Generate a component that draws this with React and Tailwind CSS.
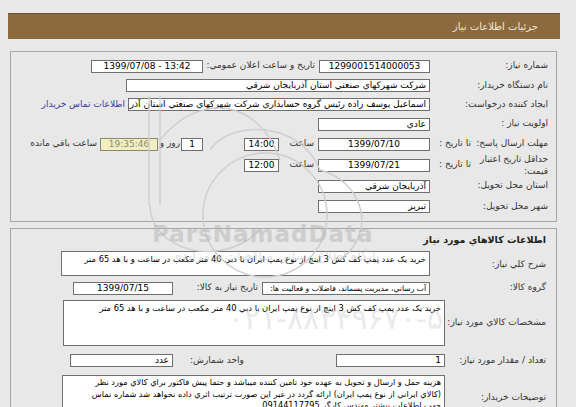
import React from 'react';

const Box = ({ className = '', children, dir, size = 'text-[9px]', tone = 'bg-white text-black border-[#6f6f6f]' }) => (
  <div
    dir={dir}
    className={`h-[13px] shrink-0 border px-[3px] leading-[11px] overflow-hidden whitespace-nowrap ${size} ${tone} ${className}`}
  >
    {children}
  </div>
);

const Label = ({ className = '', children }) => (
  <div className={`shrink-0 whitespace-nowrap text-[9px] ${className}`}>{children}</div>
);

const Watermark = () => (
  <div className="pointer-events-none absolute inset-0">
    <svg width="576" height="407" className="absolute left-0 top-0" fill="none" stroke="#cdcdcd" strokeWidth="1.4">
      <line x1="149" y1="96" x2="149" y2="205" />
      <line x1="160" y1="96" x2="160" y2="205" />
      <path d="M160 140 C 200 90, 260 100, 280 160" />
      <path d="M150 205 C 150 250, 220 270, 260 230" />
      <circle cx="265" cy="215" r="62" />
      <path d="M210 150 C 230 120, 300 120, 320 170" />
      <path d="M320 170 C 360 180, 380 230, 340 260" />
    </svg>
    <div className="absolute left-[152px] top-[217px] text-[23px] font-bold tracking-[1px] text-[#b4b4b4] opacity-50 font-['DejaVu_Sans',sans-serif]">
      ParsNamadData
    </div>
    <div dir="rtl" className="absolute left-[175px] top-[246px] text-[13px] text-[#bdbdbd] opacity-45">
      پايگاه اطلاع رساني مناقصات و مزايده
    </div>
    <div className="absolute left-[228px] top-[296px] text-[30px] text-[#bdbdbd] opacity-30">
      ۰۲۱-۸۸۳۴۹۶۷۰-۵
    </div>
  </div>
);

export default function App() {
  return (
    <div className="relative w-[576px] h-[407px] overflow-hidden bg-[#e8e8e8] font-['DejaVu_Sans',sans-serif] text-[#333]">
      <div className="pt-[13px]">
        <div
          dir="rtl"
          className="ml-[8px] w-[552px] h-[26px] bg-[#8b6b3e] border-t border-[#6a5130] flex items-center pr-[22px] text-[10px] text-[#f3ead8]"
        >
          جزئيات اطلاعات نياز
        </div>
      </div>

      {/* panel 1 */}
      <div dir="rtl" className="ml-[10px] mt-[12px] w-[547px] border border-[#a6a6a6] pt-[4px] pb-[4px]">
        <div className="flex items-center h-[20px]">
          <Label className="w-[126px] pr-[8px]">شماره نياز:</Label>
          <Box className="w-[111px] text-center">1299001514000053</Box>
          <Label className="w-[116px] pr-[4px]">تاريخ و ساعت اعلان عمومي:</Label>
          <Box dir="ltr" className="w-[112px] text-center">1399/07/08 - 13:42</Box>
        </div>
        <div className="flex items-center h-[19px]">
          <Label className="w-[126px] pr-[8px]">نام دستگاه خريدار:</Label>
          <Box className="w-[304px]">شرکت شهرکهاي صنعتي استان آذربايجان شرقي</Box>
        </div>
        <div className="flex items-center h-[19px]">
          <Label className="w-[126px] pr-[8px]">ايجاد کننده درخواست:</Label>
          <Box className="w-[302px]">اسماعيل يوسف زاده رئيس گروه حسابداري شرکت شهرکهاي صنعتي استان آذر</Box>
          <Label className="pr-[3px] text-[#3b3ba6]">اطلاعات تماس خريدار</Label>
        </div>
        <div className="flex items-center h-[20px]">
          <Label className="w-[126px] pr-[8px]">اولويت نياز :</Label>
          <Box className="w-[112px]">عادي</Box>
        </div>
        <div className="flex items-center h-[20px]">
          <div className="w-[126px] shrink-0 flex justify-between pr-[8px] pl-[9px] text-[9px]">
            <span>مهلت ارسال پاسخ:</span>
            <span>تا تاريخ :</span>
          </div>
          <Box className="w-[112px] text-center">1399/07/10</Box>
          <Label className="w-[39px] pr-[4px]">ساعت</Label>
          <Box className="w-[35px] text-center">14:00</Box>
          <div className="w-[41px] shrink-0" />
          <Box className="w-[22px] text-center">1</Box>
          <Label className="w-[23px] pr-[1px]">روز و</Label>
          <Box className="w-[58px] text-center" tone="bg-[#f0eec2] text-[#8d8c6c] border-[#8a8a6a]">19:35:46</Box>
          <Label className="pr-[3px]">ساعت باقي مانده</Label>
        </div>
        <div className="flex items-center h-[22px]">
          <div className="w-[126px] shrink-0 flex items-center justify-between pr-[8px] pl-[9px] text-[9px]">
            <span className="leading-[12px]">
              حداقل تاريخ اعتبار
              <br />
              قيمت:
            </span>
            <span>تا تاريخ :</span>
          </div>
          <Box className="w-[112px] text-center">1399/07/21</Box>
          <Label className="w-[39px] pr-[4px]">ساعت</Label>
          <Box className="w-[35px] text-center">12:00</Box>
        </div>
        <div className="flex items-center h-[20px]">
          <Label className="w-[126px] pr-[8px]">استان محل تحويل:</Label>
          <Box className="w-[112px]">آذربايجان شرقي</Box>
        </div>
        <div className="flex items-center h-[21px]">
          <Label className="w-[126px] pr-[8px]">شهر محل تحويل:</Label>
          <Box className="w-[112px]">تبريز</Box>
        </div>
      </div>

      {/* panel 2 */}
      <div dir="rtl" className="ml-[10px] mt-[6px] w-[547px] border border-[#a6a6a6]">
        <div className="h-[22px] flex items-center pr-[10px] text-[9.5px] font-bold text-[#222]">
          اطلاعات کالاهاي مورد نياز
        </div>
        <div className="flex items-center h-[25px]">
          <Label className="w-[126px] pr-[10px] pt-[3px]">شرح کلي نياز:</Label>
          <div className="w-[369px] h-[25px] shrink-0 border border-[#6f6f6f] bg-white px-[3px] pt-[2px] text-[8.3px] leading-[11px] text-black whitespace-nowrap overflow-hidden">
            خريد يک عدد پمپ کف کش 3 اينچ از نوع پمپ ايران با دبي 40 متر مکعب در ساعت و با هد 65 متر
          </div>
        </div>
        <div className="flex items-center h-[24px]">
          <Label className="w-[126px] pr-[10px]">گروه کالا:</Label>
          <Box className="w-[168px]" size="text-[7.6px]">آب رساني، مديريت پسماند، فاضلاب و فعاليت ها:</Box>
          <Label className="w-[89px] pr-[4px]">تاريخ نياز به کالا:</Label>
          <Box className="w-[100px] text-center">1399/07/15</Box>
        </div>
        <div className="flex items-center h-[46px]">
          <Label className="w-[111px] pr-[10px]">مشخصات کالاي مورد نياز:</Label>
          <div className="w-[382px] h-[46px] shrink-0 border border-[#6f6f6f] bg-white px-[3px] pt-[2px] text-[8.3px] leading-[11px] text-black whitespace-nowrap overflow-hidden">
            خريد يک عدد پمپ کف کش 3 اينچ از نوع پمپ ايران با دبي 40 متر مکعب در ساعت و با هد 65 متر
          </div>
        </div>
        <div className="flex items-center h-[29px]">
          <Label className="w-[111px] pr-[10px]">تعداد / مقدار مورد نياز:</Label>
          <Box className="w-[109px]">1</Box>
          <div className="w-[163px] shrink-0 text-left pl-[17px] text-[9px]">واحد شمارش:</div>
          <Box className="w-[103px]">عدد</Box>
        </div>
        <div className="flex items-start">
          <Label className="w-[111px] pr-[10px] pt-[16px]">توضيحات خريدار:</Label>
          <div className="w-[383px] h-[48px] shrink-0 border border-[#6f6f6f] bg-white px-[3px] pt-[1px] text-[8.2px] leading-[11.5px] text-black whitespace-nowrap overflow-hidden">
            <div>هزينه حمل و ارسال و تحويل به عهده خود تامين کننده ميباشد و حتما پيش فاکتور براي کالاي مورد نظر</div>
            <div>(کالاي ايراني از نوع پمپ ايران) ارائه گردد در غير اين صورت ترتيب اثري داده نخواهد شد شماره تماس</div>
            <div>جهت اطلاعات بيشتر مهندس کارگر 09144117795</div>
          </div>
        </div>
      </div>

      <Watermark />
    </div>
  );
}
